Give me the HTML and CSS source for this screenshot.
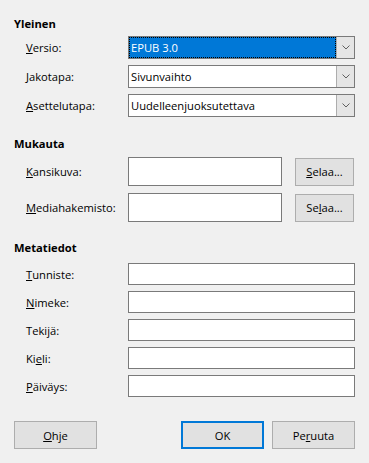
FILE: index.html
```html
<!DOCTYPE html>
<html lang="fi">
<head>
	<title>EPUB-vienti</title>
	<link rel="stylesheet" href="styles.css">
</head>
<body>
	<div class="dialog">
		<h2 class="section-title">Yleinen</h2>
		<div class="rows rows-general">
			<div class="row combo-row">
				<label><u>V</u>ersio:</label>
				<div class="combo">
					<div class="combo-value selected">EPUB 3.0</div>
					<div class="combo-arrow"><svg width="8" height="5" viewBox="0 0 8 5"><path d="M0.5 0.5 L4 4 L7.5 0.5" fill="none" stroke="#606060" stroke-width="1"/></svg></div>
				</div>
			</div>
			<div class="row combo-row">
				<label><u>J</u>akotapa:</label>
				<div class="combo">
					<div class="combo-value">Sivunvaihto</div>
					<div class="combo-arrow"><svg width="8" height="5" viewBox="0 0 8 5"><path d="M0.5 0.5 L4 4 L7.5 0.5" fill="none" stroke="#606060" stroke-width="1"/></svg></div>
				</div>
			</div>
			<div class="row combo-row">
				<label><u>A</u>settelutapa:</label>
				<div class="combo">
					<div class="combo-value">Uudelleenjuoksutettava</div>
					<div class="combo-arrow"><svg width="8" height="5" viewBox="0 0 8 5"><path d="M0.5 0.5 L4 4 L7.5 0.5" fill="none" stroke="#606060" stroke-width="1"/></svg></div>
				</div>
			</div>
		</div>

		<h2 class="section-title title-custom">Mukauta</h2>
		<div class="rows rows-custom">
			<div class="row browse-row">
				<label><u>K</u>ansikuva:</label>
				<div class="textbox short"></div>
				<button class="btn browse"><u>S</u>elaa...</button>
			</div>
			<div class="row browse-row">
				<label><u>M</u>ediahakemisto:</label>
				<div class="textbox short"></div>
				<button class="btn browse">Se<u>l</u>aa...</button>
			</div>
		</div>

		<h2 class="section-title title-meta">Metatiedot</h2>
		<div class="rows rows-meta">
			<div class="row meta-row">
				<label><u>T</u>unniste:</label>
				<div class="textbox"></div>
			</div>
			<div class="row meta-row">
				<label><u>N</u>imeke:</label>
				<div class="textbox"></div>
			</div>
			<div class="row meta-row">
				<label>Tekijä:</label>
				<div class="textbox"></div>
			</div>
			<div class="row meta-row">
				<label>Ki<u>e</u>li:</label>
				<div class="textbox"></div>
			</div>
			<div class="row meta-row">
				<label><u>P</u>äiväys:</label>
				<div class="textbox"></div>
			</div>
		</div>

		<div class="buttons">
			<button class="btn"><u>O</u>hje</button>
			<div class="spacer"></div>
			<button class="btn default">OK</button>
			<button class="btn">Pe<u>r</u>uuta</button>
		</div>
	</div>
</body>
</html>
```

FILE: styles.css
```css
body {
	margin: 0;
	padding: 0;
	background: #f0f0f0;
	font-family: "Open Sans", "Noto Sans", sans-serif;
	font-size: 11.2px;
	color: #000;
}

.dialog {
	padding: 16px 14px 0 14px;
}

.section-title {
	margin: 0;
	font-size: 11.2px;
	font-weight: bold;
	height: 16px;
	line-height: 16px;
}

.title-custom {
	margin-top: 19px;
}

.title-meta {
	margin-top: 18px;
}

.rows {
	display: flex;
	flex-direction: column;
	padding-left: 12px;
}

.rows-general {
	margin-top: 4px;
	gap: 6px;
}

.rows-custom {
	margin-top: 5px;
	gap: 7px;
}

.rows-meta {
	margin-top: 7px;
	gap: 6px;
}

.row {
	display: flex;
	align-items: center;
}

.row label {
	width: 102px;
	flex-shrink: 0;
}

u {
	text-underline-offset: 1px;
}

.combo-row {
	height: 23px;
}

.combo {
	flex: 1;
	height: 23px;
	box-sizing: border-box;
	border: 1px solid #7a7a7a;
	background: #fff;
	display: flex;
}

.combo-value {
	flex: 1;
	padding-left: 2px;
	line-height: 21px;
}

.combo-value.selected {
	background: #0078d7;
	color: #fff;
	outline: 1px dotted #000;
	outline-offset: -1px;
}

.combo-arrow {
	width: 17px;
	border-left: 1px solid #adadad;
	background: #e5e5e5;
	display: flex;
	align-items: center;
	justify-content: center;
}

.browse-row {
	height: 29px;
}

.textbox {
	flex: 1;
	height: 100%;
	box-sizing: border-box;
	border: 1px solid #7a7a7a;
	background: #fff;
}

.textbox.short {
	flex: none;
	width: 154px;
}

.meta-row {
	height: 22px;
}

.btn {
	font-family: inherit;
	font-size: 11.2px;
	color: #000;
	background: #e1e1e1;
	border: 1px solid #adadad;
	padding: 0;
	width: 83px;
	height: 28px;
	box-sizing: border-box;
}

.btn.browse {
	width: 59px;
	margin-left: 13px;
}

.btn.default {
	border: 2px solid #0078d7;
}

.buttons {
	display: flex;
	gap: 8px;
	margin-top: 24px;
}

.spacer {
	flex: 1;
}
```
